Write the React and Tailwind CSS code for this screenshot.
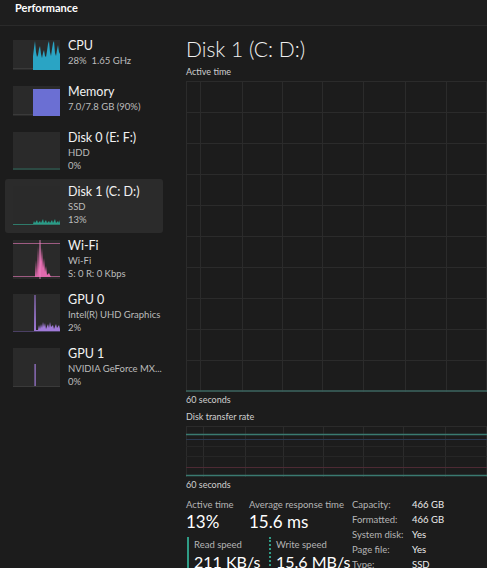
import React from 'react'

const FONT = { fontFamily: 'Lato, "Noto Sans", sans-serif' }

function Thumb({ h, children }) {
  return (
    <svg width="47" height={h} viewBox={`0 0 47 ${h}`} className="shrink-0 block">
      <rect x="0" y="0" width="47" height={h} fill="#2a2a2a" />
      {children}
    </svg>
  )
}

function CpuThumb() {
  return (
    <Thumb h={30}>
      <polygon
        fill="#2aa4c4"
        points="20,30 20,16 21,8 22,1 23,12 24,17 25,15 26,9 27,6 28,14 29,18 30,13 31,10 32,16 33,17 34,11 35,4 36,1 37,12 38,16 39,9 40,3 41,1 42,13 43,16 44,10 45,5 46,12 47,14 47,30"
      />
      <line x1="0" y1="28.5" x2="20" y2="28.5" stroke="#3a3a3a" />
    </Thumb>
  )
}

function MemThumb() {
  return (
    <Thumb h={30}>
      <rect x="20" y="3" width="27" height="27" fill="#6b6fd3" />
      <line x1="0" y1="28.5" x2="20" y2="28.5" stroke="#3a3a3a" />
    </Thumb>
  )
}

function Disk0Thumb() {
  return (
    <Thumb h={38}>
      <line x1="0" y1="37" x2="47" y2="37" stroke="#2f6a5c" strokeWidth="1.2" />
    </Thumb>
  )
}

function Disk1Thumb() {
  return (
    <Thumb h={40}>
      <polygon
        fill="#2a9c88"
        points="20,38 21,35 22,37 24,34 25,37 27,35 28,37 30,33 31,37 33,34 34,37 36,35 37,37 39,34 40,37 42,33 43,37 45,35 46,37 47,34 47,38"
      />
      <line x1="0" y1="38.5" x2="47" y2="38.5" stroke="#2f7a6a" />
    </Thumb>
  )
}

function WifiThumb() {
  return (
    <Thumb h={39}>
      <line x1="0" y1="3.5" x2="47" y2="3.5" stroke="#9e5b82" />
      <line x1="0" y1="36.5" x2="47" y2="36.5" stroke="#9e5b82" />
      <polygon
        fill="#e06aad"
        points="22,37 23,20 24,37 25,6 26,30 27,1 28,22 29,8 30,28 31,18 32,32 33,26 34,35 36,33 38,37"
      />
      <line x1="27" y1="0" x2="27" y2="39" stroke="#f08ac6" strokeWidth="0.8" />
    </Thumb>
  )
}

function Gpu0Thumb() {
  return (
    <Thumb h={38}>
      <polygon
        fill="#a07ad8"
        points="20,38 21,38 21.5,1 22.5,1 23,36 25,36 26,31 27,35 28,30 29,34 30,28 31,33 32,29 33,35 35,30 36,34 37,28 38,33 40,31 41,35 43,30 44,34 46,31 47,35 47,38"
      />
      <line x1="0" y1="37.5" x2="47" y2="37.5" stroke="#4a3f63" />
    </Thumb>
  )
}

function Gpu1Thumb() {
  return (
    <Thumb h={39}>
      <rect x="21.5" y="16" width="1.2" height="23" fill="#a07ad8" />
      <line x1="0" y1="38.5" x2="47" y2="38.5" stroke="#3a3a3a" />
    </Thumb>
  )
}

const ITEMS = [
  { title: 'CPU', lines: ['28%  1.65 GHz'], thumb: <CpuThumb />, h: 'h-[46px]' },
  { title: 'Memory', lines: ['7.0/7.8 GB (90%)'], thumb: <MemThumb />, h: 'h-[46px]' },
  { title: 'Disk 0 (E: F:)', lines: ['HDD', '0%'], thumb: <Disk0Thumb />, h: 'h-[54px]' },
  { title: 'Disk 1 (C: D:)', lines: ['SSD', '13%'], thumb: <Disk1Thumb />, h: 'h-[54px]', active: true },
  { title: 'Wi-Fi', lines: ['Wi-Fi', 'S: 0 R: 0 Kbps'], thumb: <WifiThumb />, h: 'h-[54px]' },
  { title: 'GPU 0', lines: ['Intel(R) UHD Graphics', '2%'], thumb: <Gpu0Thumb />, h: 'h-[54px]' },
  { title: 'GPU 1', lines: ['NVIDIA GeForce MX...', '0%'], thumb: <Gpu1Thumb />, h: 'h-[54px]' },
]

function SideItem({ item }) {
  return (
    <div
      className={`ml-[5px] w-[158px] ${item.h} flex items-start gap-[8px] pl-[8px] pt-[7px] rounded-[3px] ${
        item.active ? 'bg-[#2b2b2b]' : ''
      }`}
    >
      {item.thumb}
      <div className="flex flex-col -mt-[2px]">
        <div className="text-[12.5px] leading-[16px] text-[#f2f2f2] whitespace-nowrap">{item.title}</div>
        {item.lines.map((l, i) => (
          <div key={i} className="text-[9.5px] leading-[13px] text-[#bdbdbd] whitespace-pre">
            {l}
          </div>
        ))}
      </div>
    </div>
  )
}

function ActiveChart() {
  const vx = [0.5, 14.5, 56.5, 96.5, 136.5, 177.5, 219.5, 260.5, 300.5]
  const hy = [0.5, 31.5, 62.5, 93.5, 124.5, 155.5, 186.5, 217.5, 248.5, 279.5]
  return (
    <svg width="320" height="311" className="block">
      {vx.map((x) => (
        <line key={x} x1={x} y1="0" x2={x} y2="311" stroke="#2b2b2b" />
      ))}
      {hy.map((y) => (
        <line key={y} x1="0" y1={y} x2="320" y2={y} stroke="#2b2b2b" />
      ))}
      <line x1="0" y1="310" x2="320" y2="310" stroke="#3d6660" strokeWidth="1.5" />
    </svg>
  )
}

function TransferChart() {
  const vx = [0.5, 17.5, 59.5, 97.5, 137.5, 177.5, 217.5, 259.5, 300.5]
  return (
    <svg width="320" height="51" className="block">
      {vx.map((x) => (
        <line key={x} x1={x} y1="0" x2={x} y2="51" stroke="#2b2b2b" />
      ))}
      <line x1="0" y1="0.5" x2="320" y2="0.5" stroke="#2b2b2b" />
      <line x1="0" y1="20.5" x2="320" y2="20.5" stroke="#262626" />
      <line x1="0" y1="30.5" x2="320" y2="30.5" stroke="#262626" />
      <line x1="0" y1="8.5" x2="320" y2="8.5" stroke="#3a7a70" strokeWidth="1.3" />
      <line x1="0" y1="13.5" x2="320" y2="13.5" stroke="#2b3a52" />
      <line x1="0" y1="41.5" x2="320" y2="41.5" stroke="#4d2a34" />
      <line x1="0" y1="49.5" x2="320" y2="49.5" stroke="#3a7a70" strokeWidth="1.3" />
    </svg>
  )
}

const PROPS = [
  ['Capacity:', '466 GB'],
  ['Formatted:', '466 GB'],
  ['System disk:', 'Yes'],
  ['Page file:', 'Yes'],
  ['Type:', 'SSD'],
]

export default function App() {
  return (
    <div className="w-[487px] h-[568px] overflow-hidden bg-[#1c1c1c] flex flex-col" style={FONT}>
      <header className="h-[26px] shrink-0 border-b border-[#2a2a2a] bg-[#1e1e1e] pl-[15px]">
        <div className="text-[11px] leading-[14px] font-bold text-white pt-[1px]">Performance</div>
      </header>

      <div className="flex flex-1 min-h-0">
        <aside className="w-[170px] shrink-0 pt-[7px] flex flex-col">
          {ITEMS.map((it) => (
            <SideItem key={it.title} item={it} />
          ))}
        </aside>

        <main className="flex-1 min-w-0 pl-[16px] pt-[9px] overflow-hidden">
          <h1 className="text-[21px] leading-[28px] font-light text-[#f0f0f0] whitespace-nowrap">Disk 1 (C: D:)</h1>
          <div className="text-[9px] leading-[11px] text-[#cfcfcf] mt-[3px] mb-[4px]">Active time</div>
          <ActiveChart />
          <div className="text-[9px] leading-[11px] text-[#cfcfcf] mt-[2px]">60 seconds</div>
          <div className="text-[9px] leading-[11px] text-[#cfcfcf] mt-[6px] mb-[4px]">Disk transfer rate</div>
          <TransferChart />
          <div className="text-[9px] leading-[11px] text-[#cfcfcf] mt-[2px]">60 seconds</div>

          <div className="flex mt-[9px] gap-[8px]">
            <div className="flex flex-col w-[158px] shrink-0">
              <div className="flex">
                <div className="w-[63px] shrink-0">
                  <div className="text-[9.5px] leading-[12px] text-[#b5b5b5] whitespace-nowrap">Active time</div>
                  <div className="text-[17px] leading-[22px] text-white">13%</div>
                </div>
                <div>
                  <div className="text-[9.5px] leading-[12px] text-[#b5b5b5] whitespace-nowrap">Average response time</div>
                  <div className="text-[17px] leading-[22px] text-white">15.6 ms</div>
                </div>
              </div>
              <div className="flex mt-[4px]">
                <div className="w-[82px] shrink-0 ml-[1px] border-l-2 border-[#2f9c86] pl-[5px] pt-[2px]">
                  <div className="text-[9.5px] leading-[12px] text-[#b5b5b5] whitespace-nowrap">Read speed</div>
                  <div className="text-[16px] leading-[22px] text-white whitespace-nowrap">211 KB/s</div>
                </div>
                <div className="border-l-2 border-dotted border-[#2f9c86] pl-[5px] pt-[2px]">
                  <div className="text-[9.5px] leading-[12px] text-[#b5b5b5] whitespace-nowrap">Write speed</div>
                  <div className="text-[16px] leading-[22px] text-white whitespace-nowrap">15.6 MB/s</div>
                </div>
              </div>
            </div>
            <div className="flex flex-col">
              {PROPS.map(([k, v]) => (
                <div key={k} className="flex h-[15px] items-start">
                  <div className="w-[60px] text-[9.5px] leading-[12px] text-[#b5b5b5] whitespace-nowrap">{k}</div>
                  <div className="text-[9.5px] leading-[12px] text-[#ededed] whitespace-nowrap">{v}</div>
                </div>
              ))}
            </div>
          </div>
        </main>
      </div>
    </div>
  )
}
